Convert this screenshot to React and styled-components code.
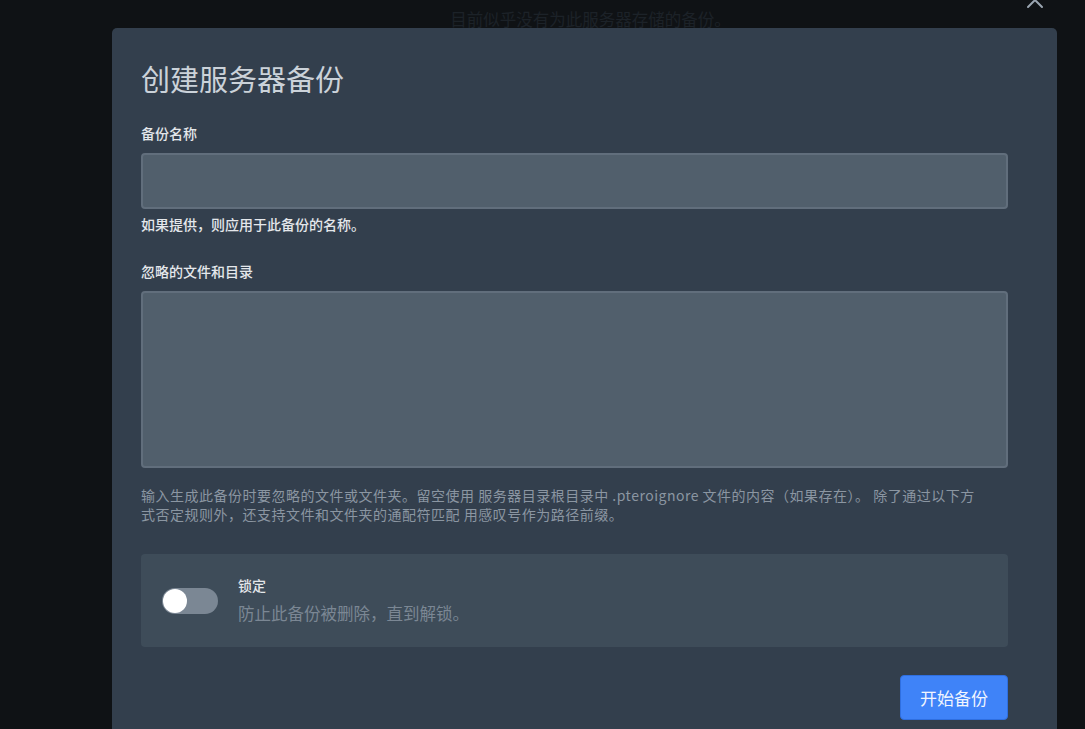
import React from "react";
import styled, { createGlobalStyle } from "styled-components";

const GlobalStyle = createGlobalStyle`
  html, body {
    margin: 0;
    padding: 0;
    background: #0f1216;
    overflow: hidden;
  }
  body {
    font-family: "Noto Sans CJK SC", "Noto Sans", sans-serif;
  }
`;

const Page = styled.div`
  height: 729px;
  display: flex;
  justify-content: center;
  padding-top: 8px;
  box-sizing: border-box;
`;

const EmptyText = styled.p`
  margin: 0 0 0 96px;
  font-size: 16.5px;
  line-height: 22px;
  color: #3a4654;
`;

const Overlay = styled.div`
  position: fixed;
  inset: 0;
  background: rgba(15, 18, 22, 0.7);
  padding: 28px 0 0 112px;
`;

const Modal = styled.div`
  position: relative;
  width: 945px;
  min-height: 760px;
  box-sizing: border-box;
  background: #333f4d;
  border-radius: 5px;
  padding: 26px 49px 0 29px;
`;

const Close = styled.button`
  position: absolute;
  top: -38px;
  right: 12px;
  background: none;
  border: 0;
  padding: 0;
  cursor: pointer;
  color: #9aa5b1;
`;

const Title = styled.h2`
  margin: 0;
  font-size: 29px;
  line-height: 48px;
  font-weight: 400;
  color: #cbd2d9;
`;

const Field = styled.div`
  margin-top: ${(p) => p.$top}px;
`;

const Label = styled.label`
  display: block;
  font-size: 14px;
  line-height: 18px;
  font-weight: 500;
  color: #e4e7eb;
  margin-bottom: 11px;
`;

const Input = styled.div`
  height: ${(p) => p.$h}px;
  box-sizing: border-box;
  background: #515f6c;
  border: 2px solid #616e7c;
  border-radius: 4px;
`;

const Help = styled.p`
  margin: 5px 0 0;
  font-size: 14px;
  line-height: 20px;
  font-weight: 500;
  color: #e4e7eb;
`;

const Description = styled.p`
  margin: 18px 0 0;
  font-size: 14px;
  letter-spacing: 0.5px;
  line-height: 19px;
  color: #8b96a2;
  padding-right: 26px;
`;

const LockBox = styled.div`
  margin-top: 30px;
  height: 93px;
  background: #3e4c59;
  border-radius: 4px;
  display: flex;
  align-items: center;
  padding-left: 21px;
  gap: 20px;
`;

const Toggle = styled.div`
  width: 56px;
  height: 26px;
  border-radius: 13px;
  background: #7b8794;
  display: flex;
  align-items: center;
  padding-left: 1px;
  box-sizing: border-box;
`;

const Knob = styled.span`
  width: 24px;
  height: 24px;
  border-radius: 50%;
  background: #fff;
`;

const LockText = styled.div`
  display: flex;
  flex-direction: column;
  margin-top: -2px;
`;

const LockTitle = styled.span`
  font-size: 14px;
  line-height: 18px;
  font-weight: 500;
  color: #e4e7eb;
`;

const LockDesc = styled.span`
  margin-top: 8px;
  font-size: 16.5px;
  line-height: 22px;
  color: #7b8794;
`;

const Actions = styled.div`
  display: flex;
  justify-content: flex-end;
  margin-top: 28px;
`;

const Button = styled.button`
  width: 108px;
  height: 45px;
  background: #3f83f8;
  border: 1px solid #2f6fe0;
  border-radius: 4px;
  color: #f0f5ff;
  font-family: inherit;
  font-size: 17px;
  cursor: pointer;
`;

const App = () => {
  return (
    <>
      <GlobalStyle />
      <Page>
        <EmptyText>目前似乎没有为此服务器存储的备份。</EmptyText>
      </Page>
      <Overlay>
        <Modal>
          <Close>
            <svg width="20" height="20" viewBox="0 0 20 20" fill="none" stroke="currentColor" strokeWidth="2" strokeLinecap="round">
              <path d="M3 3l14 14M17 3L3 17" />
            </svg>
          </Close>
          <Title>创建服务器备份</Title>
          <Field $top={22}>
            <Label>备份名称</Label>
            <Input $h={56} />
            <Help>如果提供，则应用于此备份的名称。</Help>
          </Field>
          <Field $top={28}>
            <Label>忽略的文件和目录</Label>
            <Input $h={177} />
            <Description>
              输入生成此备份时要忽略的文件或文件夹。留空使用 服务器目录根目录中 .pteroignore 文件的内容（如果存在）。 除了通过以下方式否定规则外，还支持文件和文件夹的通配符匹配 用感叹号作为路径前缀。
            </Description>
          </Field>
          <LockBox>
            <Toggle>
              <Knob />
            </Toggle>
            <LockText>
              <LockTitle>锁定</LockTitle>
              <LockDesc>防止此备份被删除，直到解锁。</LockDesc>
            </LockText>
          </LockBox>
          <Actions>
            <Button>开始备份</Button>
          </Actions>
        </Modal>
      </Overlay>
    </>
  );
};

export default App;
